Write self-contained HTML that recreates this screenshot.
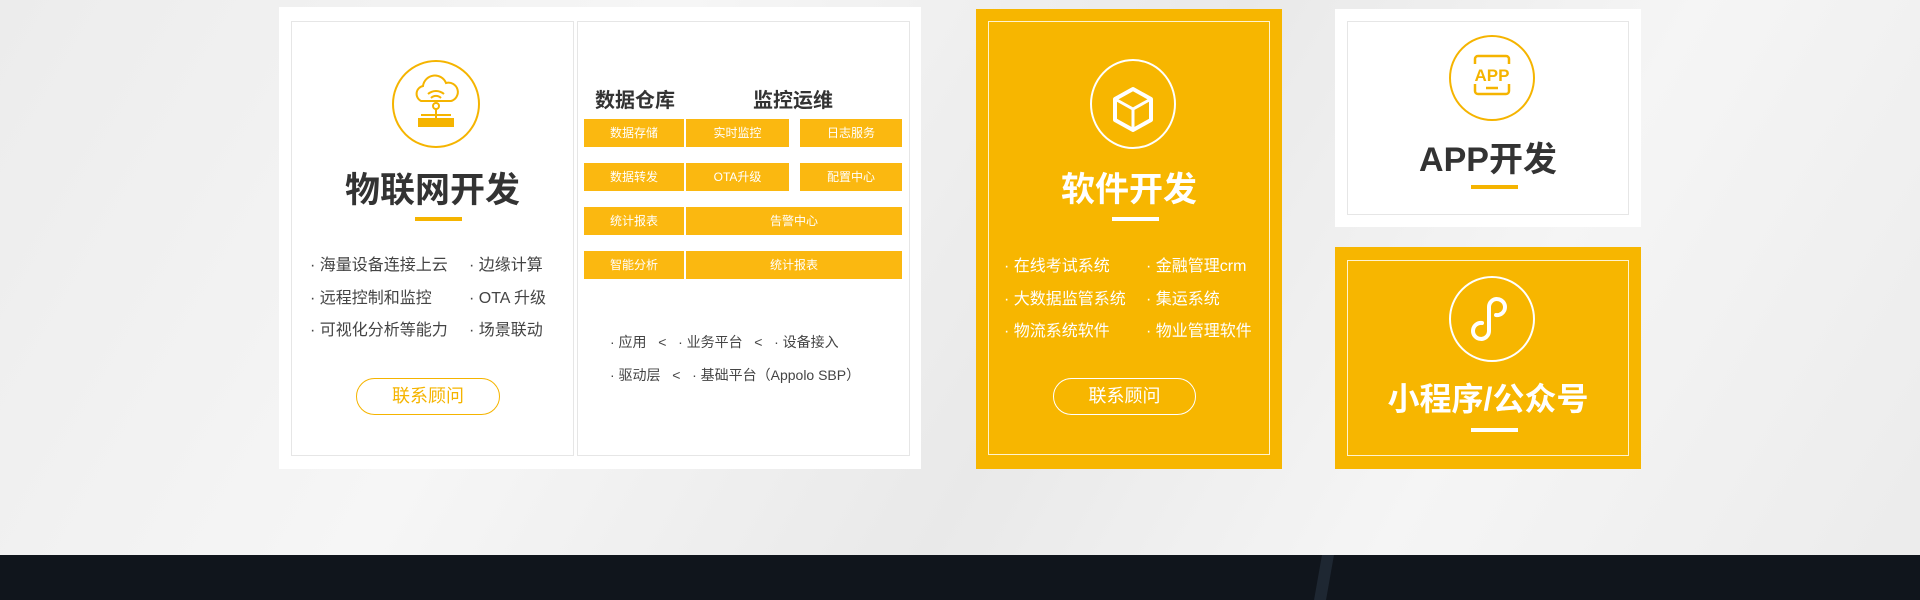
<!DOCTYPE html>
<html><head><meta charset="utf-8"><style>
*{margin:0;padding:0;box-sizing:border-box}
body{width:1920px;height:600px;overflow:hidden;position:relative;font-family:"Liberation Sans","Noto Sans CJK SC",sans-serif;background:linear-gradient(120deg,#ececec 0%,#f6f6f6 30%,#e9e9e9 55%,#f5f5f5 75%,#ebebeb 100%)}
.a{position:absolute}
.c{position:absolute;text-align:center;white-space:nowrap}
.t{position:absolute;white-space:nowrap;font-size:16px;color:#444}
.cell{position:absolute;background:#fbb810;color:#fff;font-size:12px;text-align:center;line-height:28px}
.w{color:#fff}
</style></head><body>
<div class="a" style="left:0;top:555px;width:1920px;height:45px;background:#10151c"></div>
<div class="a" style="left:1318px;top:555px;width:12px;height:45px;background:#1e2732;transform:skewX(-10deg)"></div>

<!-- card 1 -->
<div class="a" style="left:279px;top:7px;width:642px;height:462px;background:#fff"></div>
<div class="a" style="left:291px;top:21px;width:283px;height:435px;border:1px solid #e6e6e6"></div>
<div class="a" style="left:577px;top:21px;width:333px;height:435px;border:1px solid #e6e6e6"></div>
<svg class="a" style="left:391px;top:59px" width="90" height="90" viewBox="0 0 90 90" fill="none" stroke="#f5b400" stroke-width="2">
<circle cx="45" cy="45" r="43"/>
<path d="M30 42a8 8 0 0 1 2-15a12 12 0 0 1 23-3a9 9 0 0 1 5 18z"/>
<path d="M37 35a12 12 0 0 1 16 0M40 39a7 7 0 0 1 10 0"/>
<circle cx="45" cy="47" r="3"/><path d="M45 50v9M30 56h30"/>
<rect x="28" y="60" width="34" height="7" fill="#f5b400"/></svg>
<div class="c" style="left:291px;width:283px;top:162px;font-size:35px;font-weight:bold;color:#333">物联网开发</div>
<div class="a" style="left:415px;top:217px;width:47px;height:4px;background:#f5b400"></div>
<div class="t" style="left:310px;top:251px">· 海量设备连接上云</div>
<div class="t" style="left:469px;top:251px">· 边缘计算</div>
<div class="t" style="left:310px;top:284px">· 远程控制和监控</div>
<div class="t" style="left:469px;top:284px">· OTA 升级</div>
<div class="t" style="left:310px;top:316px">· 可视化分析等能力</div>
<div class="t" style="left:469px;top:316px">· 场景联动</div>
<div class="c" style="left:356px;top:378px;width:144px;height:37px;border:1px solid #f5b400;border-radius:19px;color:#f5b400;font-size:18px;line-height:35px">联系顾问</div>

<div class="t" style="left:595px;top:84px;font-size:20px;font-weight:bold;color:#333">数据仓库</div>
<div class="t" style="left:753px;top:84px;font-size:20px;font-weight:bold;color:#333">监控运维</div>
<div class="cell" style="left:584px;top:119px;width:100px">数据存储</div>
<div class="cell" style="left:686px;top:119px;width:103px">实时监控</div>
<div class="cell" style="left:800px;top:119px;width:102px">日志服务</div>
<div class="cell" style="left:584px;top:163px;width:100px">数据转发</div>
<div class="cell" style="left:686px;top:163px;width:103px">OTA升级</div>
<div class="cell" style="left:800px;top:163px;width:102px">配置中心</div>
<div class="cell" style="left:584px;top:207px;width:100px">统计报表</div>
<div class="cell" style="left:686px;top:207px;width:216px">告警中心</div>
<div class="cell" style="left:584px;top:251px;width:100px">智能分析</div>
<div class="cell" style="left:686px;top:251px;width:216px">统计报表</div>
<div class="t" style="left:610px;top:332px;font-size:14px">· 应用 &nbsp;&nbsp;&lt; &nbsp;&nbsp;· 业务平台 &nbsp;&nbsp;&lt; &nbsp;&nbsp;· 设备接入</div>
<div class="t" style="left:610px;top:365px;font-size:14px">· 驱动层 &nbsp;&nbsp;&lt; &nbsp;&nbsp;· 基础平台（Appolo SBP）</div>

<!-- card 2 -->
<div class="a" style="left:976px;top:9px;width:306px;height:460px;background:#f7b600"></div>
<div class="a" style="left:988px;top:21px;width:282px;height:434px;border:1px solid #fff3cf"></div>
<svg class="a" style="left:1089px;top:59px" width="88" height="90" viewBox="0 0 88 90" fill="none" stroke="#fff" stroke-width="2">
<ellipse cx="44" cy="45" rx="42" ry="44"/>
<path d="M44 30l18 10v21l-18 10l-18-10v-21z" stroke-width="4" stroke-linejoin="round"/>
<path d="M26 40l18 10l18-10M44 50v21" stroke-width="3"/></svg>
<div class="c" style="left:976px;width:306px;top:162px;font-size:34px;font-weight:bold;color:#fff">软件开发</div>
<div class="a" style="left:1112px;top:217px;width:47px;height:4px;background:#fff"></div>
<div class="t w" style="left:1004px;top:252px">· 在线考试系统</div>
<div class="t w" style="left:1146px;top:252px">· 金融管理crm</div>
<div class="t w" style="left:1004px;top:285px">· 大数据监管系统</div>
<div class="t w" style="left:1146px;top:285px">· 集运系统</div>
<div class="t w" style="left:1004px;top:317px">· 物流系统软件</div>
<div class="t w" style="left:1146px;top:317px">· 物业管理软件</div>
<div class="c" style="left:1053px;top:378px;width:143px;height:37px;border:1px solid #fff;border-radius:19px;color:#fff;font-size:18px;line-height:35px">联系顾问</div>

<!-- card 3 -->
<div class="a" style="left:1335px;top:9px;width:306px;height:218px;background:#fff"></div>
<div class="a" style="left:1347px;top:21px;width:282px;height:194px;border:1px solid #e6e6e6"></div>
<svg class="a" style="left:1448px;top:34px" width="88" height="88" viewBox="0 0 88 88" fill="none" stroke="#f5b400" stroke-width="2">
<circle cx="44" cy="44" r="42"/>
<path d="M27 30v-5a3 3 0 0 1 3-3h28a3 3 0 0 1 3 3v5M27 50v7a3 3 0 0 0 3 3h28a3 3 0 0 0 3-3v-7" stroke-width="2.5"/>
<path d="M38 54h12" stroke-width="2.5"/>
<text x="44" y="47" text-anchor="middle" fill="#f5b400" stroke="none" font-family="Liberation Sans" font-size="17" font-weight="bold">APP</text></svg>
<div class="c" style="left:1335px;width:306px;top:132px;font-size:34px;font-weight:bold;color:#333">APP开发</div>
<div class="a" style="left:1471px;top:185px;width:47px;height:4px;background:#f5b400"></div>

<!-- card 4 -->
<div class="a" style="left:1335px;top:247px;width:306px;height:222px;background:#f7b600"></div>
<div class="a" style="left:1347px;top:260px;width:282px;height:196px;border:1px solid #fff3cf"></div>
<svg class="a" style="left:1448px;top:275px" width="88" height="88" viewBox="0 0 88 88" fill="none" stroke="#fff" stroke-width="2">
<circle cx="44" cy="44" r="42"/>
<path d="M34 52a8 8 0 1 0 7 8v-24a8 8 0 1 1 7 8" stroke-width="4" stroke-linecap="round" transform="translate(0,-4)"/></svg>
<div class="c" style="left:1335px;width:306px;top:374px;font-size:32px;font-weight:bold;color:#fff">小程序/公众号</div>
<div class="a" style="left:1471px;top:428px;width:47px;height:4px;background:#fff"></div>
</body></html>
